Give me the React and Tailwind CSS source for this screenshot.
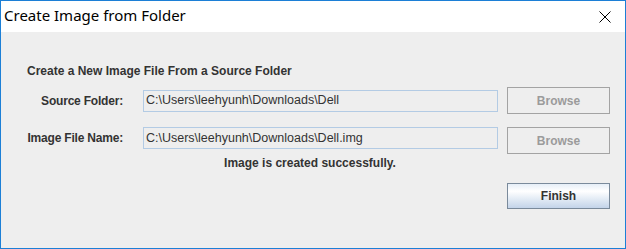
import React from "react";

const sans = "font-['Liberation_Sans',Arial,sans-serif]";

function FolderRow({ label, value, align }) {
    return (
        <div className={"flex " + (align === "center" ? "items-center h-[27px]" : "items-start")}>
            <div className="w-[96px] h-[22px] flex items-center justify-end text-[12px] font-bold text-[#333333] whitespace-nowrap tracking-[-0.2px]">
                {label}
            </div>
            <div className="ml-[20px] w-[355px] h-[22px] border border-[#b3cbe4] flex items-center pl-[2px] text-[12.5px] text-[#333333] whitespace-nowrap overflow-hidden">
                {value}
            </div>
            <button className="ml-[9px] w-[103px] h-[27px] border border-[#a3a3a3] text-[12px] font-bold text-[#9b9b9b] flex items-center justify-center">
                Browse
            </button>
        </div>
    );
}

export default function App() {
    return (
        <div className={"w-[626px] h-[249px] border border-[#1c7fd6] flex flex-col bg-[#eeeeee] " + sans}>
            {/* title bar */}
            <div className="h-[31px] bg-white flex items-center justify-between pl-[3px] pr-[14px]">
                <span className="text-[15px] text-black font-['Segoe_UI','Noto_Sans',sans-serif] leading-none pb-[2px]">
                    Create Image from Folder
                </span>
                <svg width="12" height="12" viewBox="0 0 12 12" className="mt-[1px]">
                    <path d="M0.5 0.5 L11.5 11.5 M11.5 0.5 L0.5 11.5" stroke="#000" strokeWidth="1" fill="none" />
                </svg>
            </div>

            <div className="flex-1 flex flex-col pl-[26px] pr-[15px]">
                <div className="mt-[32px] h-[14px] leading-[14px] text-[12px] font-bold text-[#333333]">
                    Create a New Image File From a Source Folder
                </div>

                <div className="mt-[9px]">
                    <FolderRow label="Source Folder:" value="C:\Users\leehyunh\Downloads\Dell" align="center" />
                </div>
                <div className="mt-[13px]">
                    <FolderRow label="Image File Name:" value="C:\Users\leehyunh\Downloads\Dell.img" align="start" />
                </div>

                <div className="mt-[2px] -ml-[26px] -mr-[15px] pr-[6px] h-[14px] leading-[14px] text-center text-[12px] font-bold text-[#333333]">
                    Image is created successfully.
                </div>

                <div className="mt-[13px] flex justify-end">
                    <button className="w-[103px] h-[26px] border border-[#7a8a9b] bg-linear-to-b from-[#e6eef7] via-white via-30% to-[#c3d4e9] text-[12px] font-bold text-[#333333] flex items-center justify-center">
                        Finish
                    </button>
                </div>
            </div>
        </div>
    );
}
